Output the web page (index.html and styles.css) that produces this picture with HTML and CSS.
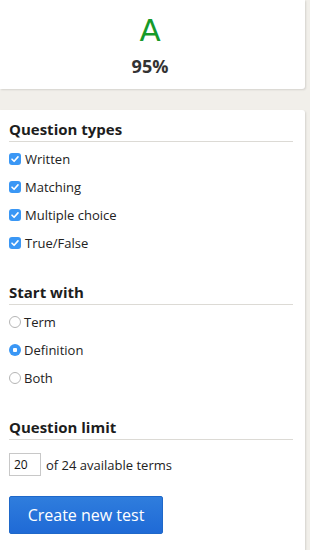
FILE: index.html
```html
<!DOCTYPE html>
<html>
<head>
<meta charset="utf-8">
<link rel="stylesheet" href="styles.css">
</head>
<body>
<div class="page">
  <div class="card score">
    <div class="grade">A</div>
    <div class="pct">95%</div>
  </div>
  <div class="card options">
    <h2 class="heading">Question types</h2>
    <ul class="list">
      <li class="item"><span class="check"><svg viewBox="0 0 12 12" width="12" height="12"><path d="M3 6.2 L5.1 8.3 L9 3.9" fill="none" stroke="#fff" stroke-width="1.6" stroke-linecap="round" stroke-linejoin="round"/></svg></span>Written</li>
      <li class="item"><span class="check"><svg viewBox="0 0 12 12" width="12" height="12"><path d="M3 6.2 L5.1 8.3 L9 3.9" fill="none" stroke="#fff" stroke-width="1.6" stroke-linecap="round" stroke-linejoin="round"/></svg></span>Matching</li>
      <li class="item"><span class="check"><svg viewBox="0 0 12 12" width="12" height="12"><path d="M3 6.2 L5.1 8.3 L9 3.9" fill="none" stroke="#fff" stroke-width="1.6" stroke-linecap="round" stroke-linejoin="round"/></svg></span>Multiple choice</li>
      <li class="item"><span class="check"><svg viewBox="0 0 12 12" width="12" height="12"><path d="M3 6.2 L5.1 8.3 L9 3.9" fill="none" stroke="#fff" stroke-width="1.6" stroke-linecap="round" stroke-linejoin="round"/></svg></span>True/False</li>
    </ul>
    <h2 class="heading">Start with</h2>
    <ul class="list">
      <li class="item"><span class="radio"></span>Term</li>
      <li class="item"><span class="radio on"></span>Definition</li>
      <li class="item"><span class="radio"></span>Both</li>
    </ul>
    <h2 class="heading">Question limit</h2>
    <div class="limit"><span class="num">20</span>of 24 available terms</div>
    <button class="btn">Create new test</button>
  </div>
</div>
</body>
</html>
```
FILE: styles.css
```css
html, body { margin: 0; padding: 0; }
body {
  background: #f1efea;
  font-family: "Open Sans", "DejaVu Sans", sans-serif;
  color: #222;
  width: 310px;
  height: 550px;
  overflow: hidden;
}
.page { width: 305px; }
.card {
  background: #fff;
  box-shadow: 1px 1px 2px rgba(0,0,0,0.12);
}
.score {
  height: 89px;
  border-radius: 0 0 3px 0;
  text-align: center;
  display: flex;
  flex-direction: column;
  align-items: center;
}
.grade {
  margin-top: 11px;
  font-family: "DejaVu Sans", sans-serif;
  font-weight: normal;
  font-size: 31px;
  line-height: 38px;
  color: #169a2a;
  width: 310px;
  margin-left: -5px;
}
.pct {
  margin-top: 5px;
  font-size: 18px;
  font-weight: 700;
  line-height: 24px;
  color: #333;
  margin-left: -5px;
  width: 310px;
}
.options {
  margin-top: 21px;
  border-radius: 0 3px 0 0;
  padding: 9px 12px 0 9px;
  height: 431px;
}
.heading {
  margin: 0;
  font-size: 15px;
  font-weight: 700;
  line-height: 20px;
  color: #1d1d1d;
  padding-bottom: 2px;
  border-bottom: 1px solid #dcdad5;
}
.heading + .list { margin-top: 3px; }
.list {
  list-style: none;
  margin: 0 0 25px 0;
  padding: 0;
}
.item {
  display: flex;
  align-items: center;
  height: 28px;
  font-size: 13px;
  color: #222;
}
.check {
  width: 12px;
  height: 12px;
  border-radius: 3px;
  background: #3a97f5;
  margin-right: 4px;
  display: flex;
}
.radio {
  width: 12px;
  height: 12px;
  border-radius: 50%;
  border: 1px solid #b5b5b5;
  box-sizing: border-box;
  margin-right: 3px;
  background: #fff;
}
.radio.on {
  border: none;
  background: radial-gradient(circle, #fff 0 2px, #3a97f5 2.5px);
}
.limit {
  margin-top: 13px;
  display: flex;
  align-items: center;
  font-size: 13px;
  color: #222;
}
.num {
  display: inline-block;
  width: 32px;
  height: 23px;
  box-sizing: border-box;
  border: 1px solid #c8c8c8;
  font-size: 12px;
  line-height: 21px;
  padding-left: 4px;
  margin-right: 5px;
  color: #111;
}
.btn {
  display: block;
  margin-top: 20px;
  width: 154px;
  height: 38px;
  border: 1px solid #1f68c9;
  border-radius: 2px;
  background: linear-gradient(#2f7ddd, #1f6ad6);
  color: #fff;
  font-family: "Open Sans", "DejaVu Sans", sans-serif;
  font-size: 16px;
  padding: 0;
}
```
